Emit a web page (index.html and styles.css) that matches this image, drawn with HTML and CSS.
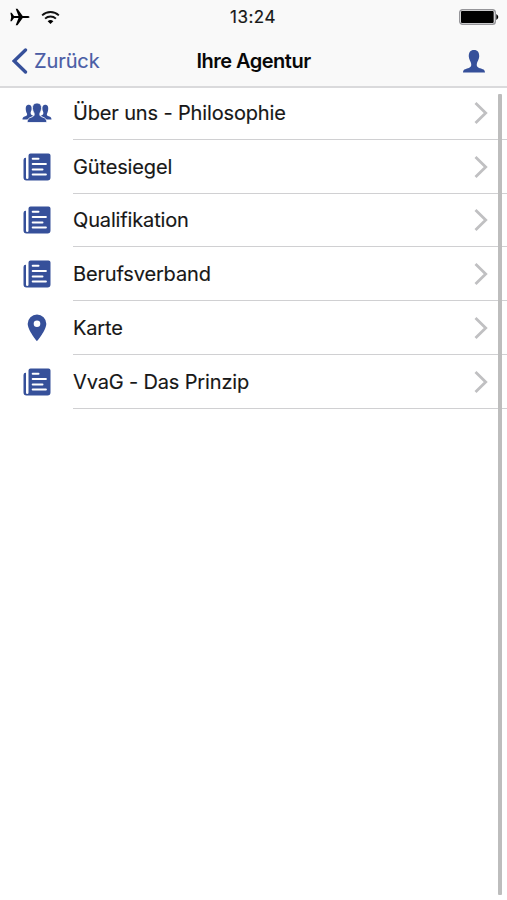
FILE: index.html
```html
<!DOCTYPE html>
<html lang="de">
<head>
<meta charset="utf-8">
<title>Ihre Agentur</title>
<link rel="stylesheet" href="styles.css">
</head>
<body>
<svg class="defs" aria-hidden="true">
  <symbol id="group" viewBox="0 0 30 22">
    <path d="M5.500 3C8.600 2.300 9.900 4.200 9.600 7.200c-.2 1.700-1 2.600-1 3.800 0 1.800 1.800 2.300 3 3-2.500 1-4.500 1.500-5.100 3.500H.5c.1-2.700 1.600-2.900 3.500-3.600 1.300-.5 1.400-1.500.8-2.700C3.600 8.700 3 4 5.500 3ZM24.500 3C21.400 2.300 20.100 4.200 20.400 7.200c.2 1.700 1 2.600 1 3.800 0 1.800-1.800 2.300-3 3 2.500 1 4.500 1.500 5.100 3.500h6c-.1-2.700-1.600-2.900-3.500-3.600-1.300-.5-1.400-1.500-.8-2.700C26.400 8.700 27 4 24.500 3Z"/>
    <path d="M15 1c3.300 0 4.800 2.300 4.500 5.700-.2 2.300-1.500 3.700-1.700 5.100-.3 2.300 1.300 2.700 3.300 3.500 2.200.8 3.500 1.700 3.800 5.200H5.100c.3-3.500 1.600-4.400 3.800-5.200 2-.8 3.600-1.200 3.300-3.500-.2-1.400-1.500-2.800-1.700-5.100C10.200 3.300 11.700 1 15 1Z" stroke="#fff" stroke-width=".8"/>
  </symbol>
  <symbol id="news" viewBox="0 0 28 28">
    <path d="M3 4.800h-.3A2.200 2.200 0 0 0 .5 7v17.500A3 3 0 0 0 3.500 27.500h21a3 3 0 0 0 3-3V2.500a2 2 0 0 0-2-2h-18a2 2 0 0 0-2 2v22.300a1.250 1.250 0 0 1-2.500 0Z"/>
    <path d="M4.250 4.500v20.300" fill="none" stroke="#fff" stroke-width="1.400"/>
    <path d="M9.700 5.700h5.800M9.700 11.100h13.200M9.700 16.400h9.800M9.700 21.500h13.200" fill="none" stroke="#fff" stroke-width="2" stroke-linecap="round"/>
  </symbol>
  <symbol id="pin" viewBox="0 0 20 28">
    <path fill-rule="evenodd" d="M10 .5a9.300 9.300 0 0 0-9.300 9.300C.7 16.300 10 27.300 10 27.300s9.300-11 9.300-17.500A9.300 9.300 0 0 0 10 .5Zm0 6a3.300 3.300 0 1 1 0 6.600 3.300 3.300 0 0 1 0-6.600Z"/>
  </symbol>
  <symbol id="next" viewBox="0 0 14 24">
    <path d="m1.500 2 10.200 10L1.500 22" fill="none" stroke="#c0c0c2" stroke-width="2.800"/>
  </symbol>
</svg>
<header class="top">
  <div class="status">
    <div class="signals">
      <svg class="plane" viewBox="0 0 20 18"><path d="M.4 4.800h1.300L4 7.900h4.500L5.700.7h1.800l5.200 7.200h4.400c1.400 0 2.500.5 2.500 1.100s-1.100 1.100-2.500 1.100h-4.400l-5.200 7.200H5.700l2.800-7.200H4l-2.300 3.100H.4L1.200 9Z"/></svg>
      <svg class="wifi" viewBox="0 0 20 15"><g fill="none" stroke="#111" stroke-width="2"><path d="M1.200 5.200a12.800 12.800 0 0 1 17.600 0M4.300 8.700a8.300 8.300 0 0 1 11.400 0"/></g><path d="M7 11.400a4.400 4.400 0 0 1 6 0l-3 3Z"/></svg>
    </div>
    <time class="clock">13:24</time>
    <svg class="battery" viewBox="0 0 40 16"><rect x=".7" y=".7" width="35.600" height="14.600" rx="2.800" fill="#fff" stroke="#96969a" stroke-width="1.400"/><rect x="2" y="2" width="32.700" height="12" rx="1"/><path d="M37.300 5q2 1.300 2 3t-2 3Z"/></svg>
  </div>
  <nav class="bar">
    <a class="back"><svg class="chevron" viewBox="0 0 16 26"><path d="M13.500 2 2.200 13l11.300 11" fill="none" stroke="#36509a" stroke-width="3.300" stroke-linecap="round"/></svg><span>Zurück</span></a>
    <h1 class="title">Ihre Agentur</h1>
    <svg class="profile" viewBox="0 0 22 23"><path d="M11 0c3.700 0 5.500 2.700 5.200 6.700-.2 2.700-1.800 4.500-2.200 6.200-.8 3.300.4 4.400 3 5.400 3 1 4.900 1.200 5 4.200H0c.1-3 2-3.200 5-4.200 2.600-1 3.800-2.100 3-5.400-.4-1.700-2-3.500-2.200-6.200C5.500 2.700 7.300 0 11 0Z"/></svg>
  </nav>
</header>
<main class="content">
  <ul class="list">
    <li class="row"><svg class="icon group"><use href="#group"/></svg><div class="cell"><span class="label">Über uns - Philosophie</span><svg class="next"><use href="#next"/></svg></div></li>
    <li class="row"><svg class="icon"><use href="#news"/></svg><div class="cell"><span class="label">Gütesiegel</span><svg class="next"><use href="#next"/></svg></div></li>
    <li class="row"><svg class="icon"><use href="#news"/></svg><div class="cell"><span class="label">Qualifikation</span><svg class="next"><use href="#next"/></svg></div></li>
    <li class="row"><svg class="icon"><use href="#news"/></svg><div class="cell"><span class="label">Berufsverband</span><svg class="next"><use href="#next"/></svg></div></li>
    <li class="row"><svg class="icon"><use href="#pin"/></svg><div class="cell"><span class="label">Karte</span><svg class="next"><use href="#next"/></svg></div></li>
    <li class="row"><svg class="icon"><use href="#news"/></svg><div class="cell"><span class="label">VvaG - Das Prinzip</span><svg class="next"><use href="#next"/></svg></div></li>
  </ul>
  <div class="scrollbar"></div>
</main>
</body>
</html>
```
FILE: styles.css
```css
* { box-sizing: border-box; }
body { margin: 0; height: 900px; overflow: hidden; background: #fff; color: #171717; font-family: Inter, sans-serif; }
.defs { position: absolute; width: 0; height: 0; }
.top { height: 88px; background: #f9f9f9; border-bottom: 2px solid #dadadc; }
.status { display: grid; grid-template-columns: 1fr auto 1fr; height: 34px; align-items: center; padding: 0 9px 0 10px; }
.signals { display: flex; align-items: center; gap: 11px; }
.plane { width: 20px; height: 18px; }
.wifi { width: 19px; height: 15px; }
.clock { font-size: 17px; line-height: 20px; letter-spacing: .5px; margin-left: -2px; -webkit-text-stroke: .2px #171717; }
.battery { width: 40px; height: 16px; justify-self: end; margin-right: -1px; }
.bar { display: grid; grid-template-columns: 1fr auto 1fr; height: 52px; align-items: center; padding: 2px 22px 0 12px; }
.back { display: flex; align-items: center; gap: 6px; color: #4b5da5; font-size: 20px; letter-spacing: -.1px; -webkit-text-stroke: .15px #4b5da5; }
.chevron { width: 16px; height: 26px; }
.title { margin: 0 -5px 0 5px; font-size: 20px; font-weight: 600; letter-spacing: -.5px; color: #080808; }
.profile { width: 22px; height: 23px; justify-self: end; fill: #36509a; }
.content { position: relative; height: 812px; }
.list { margin: 0; padding: 0; list-style: none; transform: translateY(-2px); }
.row { display: grid; grid-template-columns: 73px 1fr; height: 53.8px; align-items: center; }
.icon { width: 28px; height: 28px; margin-left: 23px; fill: #36509a; }
.icon.group { width: 30px; height: 22px; margin: 1px 0 0 22px; }
.cell { display: flex; align-items: center; justify-content: space-between; height: 100%; padding: 1px 19px 0 0; border-bottom: 1.500px solid #d0d0d2; }
.label { font-size: 20px; letter-spacing: -.15px; white-space: nowrap; -webkit-text-stroke: .15px #171717; }
.next { width: 14px; height: 24px; }
.scrollbar { position: absolute; top: 6px; right: 5px; width: 4px; height: 801px; border-radius: 1px; background: #bdbdbd; }
```
